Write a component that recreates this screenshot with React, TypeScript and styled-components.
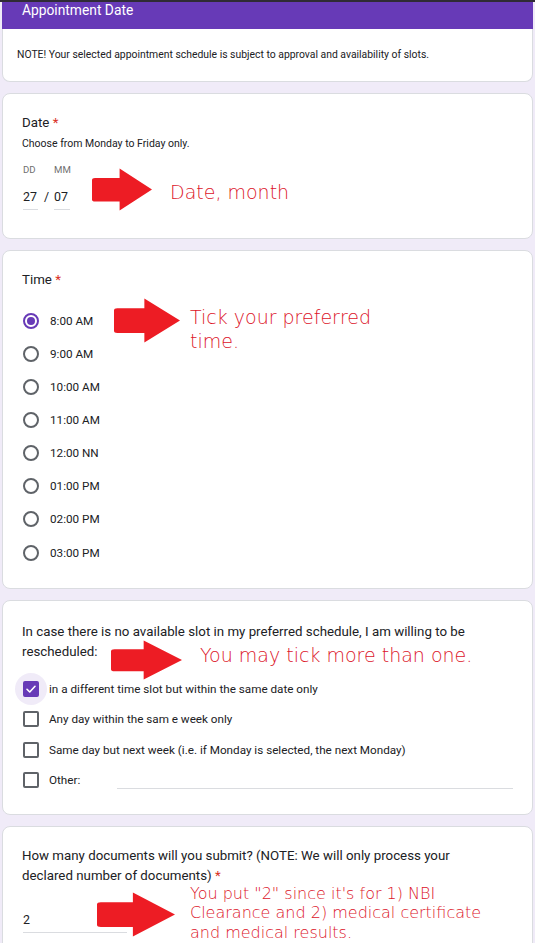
import React from "react";
import styled, { createGlobalStyle } from "styled-components";

const GlobalStyle = createGlobalStyle`
  html, body { margin: 0; padding: 0; background: #f0ebf8; overflow: hidden; }
  body { font-family: Roboto, "Liberation Sans", Arial, sans-serif; color: #202124; }
`;

const TopStrip = styled.div`
  height: 2px;
  background: #2f2b35;
`;

const Page = styled.main`
  display: flex;
  flex-direction: column;
  gap: 11px;
  padding: 0 2px;
`;

const SectionBlock = styled.section`
  display: flex;
  flex-direction: column;
`;

const SectionTab = styled.div`
  background: #673ab7;
  color: #fff;
  height: 27px;
  padding: 1px 20px 0;
  font-size: 13.8px;
  line-height: 14px;
  box-sizing: border-box;
`;

const NoteBody = styled.div`
  background: #fff;
  border: 1px solid #dadce0;
  border-top: none;
  border-radius: 0 0 8px 8px;
  padding: 19px 14px;
  font-size: 10.4px;
  line-height: 14px;
`;

const Card = styled.section<{ $pt?: number; $pb?: number }>`
  position: relative;
  background: #fff;
  border: 1px solid #dadce0;
  border-radius: 8px;
  padding: ${(p) => p.$pt ?? 21}px 19px ${(p) => p.$pb ?? 20}px;
`;

const Title = styled.div`
  font-size: 13.3px;
  line-height: 16px;
`;

const Question = styled.div`
  max-width: 452px;
  font-size: 13.3px;
  line-height: 20px;
`;

const Star = styled.span`
  color: #d93025;
`;

const Help = styled.div`
  font-size: 10.5px;
  line-height: 14px;
  margin-top: 6px;
`;

const DateGrid = styled.div`
  display: grid;
  grid-template-columns: 15px 4px 16px;
  column-gap: 6px;
  row-gap: 12px;
  margin-top: 12px;
  margin-left: 1px;
`;

const DateLabel = styled.div`
  font-size: 9.6px;
  line-height: 14px;
  color: #6f6f6f;
  white-space: nowrap;
`;

const DateValue = styled.div<{ $plain?: boolean }>`
  font-size: 12.4px;
  line-height: 16px;
  padding-bottom: 4px;
  border-bottom: 1px solid ${(p) => (p.$plain ? "transparent" : "#dadce0")};
  color: #202124;
`;

const OptionList = styled.div<{ $mt: number }>`
  display: flex;
  flex-direction: column;
  margin-top: ${(p) => p.$mt}px;
`;

const OptionRow = styled.div<{ $h: number; $gap: number }>`
  display: flex;
  align-items: center;
  height: ${(p) => p.$h}px;
  gap: ${(p) => p.$gap}px;
  padding-left: 1px;
  font-size: 11.7px;
  color: #202124;
`;

const Radio = styled.span<{ $on?: boolean }>`
  width: 16px;
  height: 16px;
  box-sizing: border-box;
  border-radius: 50%;
  border: 2px solid ${(p) => (p.$on ? "#673ab7" : "#5f6368")};
  display: flex;
  align-items: center;
  justify-content: center;
  flex: none;
  &::after {
    content: "";
    width: 8px;
    height: 8px;
    border-radius: 50%;
    background: ${(p) => (p.$on ? "#673ab7" : "transparent")};
  }
`;

const Check = styled.span<{ $on?: boolean }>`
  position: relative;
  width: 16px;
  height: 16px;
  box-sizing: border-box;
  border-radius: 2px;
  border: 2px solid ${(p) => (p.$on ? "#673ab7" : "#5f6368")};
  background: ${(p) => (p.$on ? "#673ab7" : "transparent")};
  display: flex;
  align-items: center;
  justify-content: center;
  flex: none;
  &::before {
    content: "";
    position: absolute;
    left: 50%;
    top: 50%;
    width: 32px;
    height: 32px;
    margin: -16px 0 0 -16px;
    border-radius: 50%;
    background: ${(p) => (p.$on ? "rgba(103,58,183,0.1)" : "transparent")};
    z-index: -1;
  }
`;

const CheckWrap = styled.span`
  position: relative;
  z-index: 0;
  display: flex;
`;

const OtherLine = styled.span`
  flex: 1;
  align-self: flex-end;
  margin: 0 0 6px 27px;
  border-bottom: 1px solid #dadce0;
`;

const ShortAnswer = styled.div`
  width: 104px;
  margin-top: 26px;
  margin-left: 1px;
  font-size: 12.4px;
  line-height: 16px;
  padding-bottom: 4px;
  border-bottom: 1px solid #dadce0;
`;

const Annotation = styled.div`
  position: absolute;
  left: 0;
  top: 0;
  width: 100%;
  height: 100%;
  pointer-events: none;
`;

const ArrowBox = styled.svg<{ $l: number; $t: number }>`
  position: absolute;
  left: ${(p) => p.$l}px;
  top: ${(p) => p.$t}px;
`;

const RedNote = styled.div<{ $l: number; $t: number; $w: number; $lh: number; $fs?: number }>`
  position: absolute;
  left: ${(p) => p.$l}px;
  top: ${(p) => p.$t}px;
  width: ${(p) => p.$w}px;
  font-family: "DejaVu Sans", Verdana, sans-serif;
  font-weight: 200;
  font-size: ${(p) => p.$fs ?? 19}px;
  line-height: ${(p) => p.$lh}px;
  color: #dc1429;
`;

type ArrowProps = { l: number; t: number; w: number; h: number };
const RedArrow = ({ l, t, w, h }: ArrowProps) => (
  <ArrowBox $l={l} $t={t} width={w} height={h} viewBox="0 0 100 100" preserveAspectRatio="none">
    <path d="M5 23 H46 V1 L100 50 L46 99 V78 H5 Q0 78 0 73 V28 Q0 23 5 23 Z" fill="#ed1c24" />
  </ArrowBox>
);

const times = ["8:00 AM", "9:00 AM", "10:00 AM", "11:00 AM", "12:00 NN", "01:00 PM", "02:00 PM", "03:00 PM"];
const choices = [
  "in a different time slot but within the same date only",
  "Any day within the sam e week only",
  "Same day but next week (i.e. if Monday is selected, the next Monday)",
];

export default function App() {
  return (
    <>
      <GlobalStyle />
      <TopStrip />
      <Page>
        <SectionBlock>
          <SectionTab>Appointment Date</SectionTab>
          <NoteBody>NOTE! Your selected appointment schedule is subject to approval and availability of slots.</NoteBody>
        </SectionBlock>

        <Card $pb={28}>
          <Title>
            Date <Star>*</Star>
          </Title>
          <Help>Choose from Monday to Friday only.</Help>
          <DateGrid>
            <DateLabel>DD</DateLabel>
            <span />
            <DateLabel>MM</DateLabel>
            <DateValue>27</DateValue>
            <DateValue $plain>/</DateValue>
            <DateValue>07</DateValue>
          </DateGrid>
          <Annotation>
            <RedArrow l={89} t={74} w={60} h={43} />
            <RedNote $l={167} $t={86} $w={140} $lh={24}>Date, month</RedNote>
          </Annotation>
        </Card>

        <Card $pb={19}>
          <Title>
            Time <Star>*</Star>
          </Title>
          <OptionList $mt={16}>
            {times.map((t, i) => (
              <OptionRow key={t} $h={33.15} $gap={11}>
                <Radio $on={i === 0} />
                {t}
              </OptionRow>
            ))}
          </OptionList>
          <Annotation>
            <RedArrow l={111} t={47} w={66} h={45} />
            <RedNote $l={187} $t={54} $w={200} $lh={24}>Tick your preferred time.</RedNote>
          </Annotation>
        </Card>

        <Card $pb={19}>
          <Question>In case there is no available slot in my preferred schedule, I am willing to be rescheduled:</Question>
          <OptionList $mt={12}>
            {choices.map((c, i) => (
              <OptionRow key={c} $h={30.2} $gap={10}>
                <CheckWrap>
                  <Check $on={i === 0}>
                    {i === 0 && (
                      <svg width="12" height="12" viewBox="0 0 24 24">
                        <path d="M4 12.5 L9.5 18 L20 6.5" fill="none" stroke="#fff" strokeWidth="3.2" strokeLinecap="round" strokeLinejoin="round" />
                      </svg>
                    )}
                  </Check>
                </CheckWrap>
                {c}
              </OptionRow>
            ))}
            <OptionRow $h={30.2} $gap={10}>
              <CheckWrap>
                <Check />
              </CheckWrap>
              Other:
              <OtherLine />
            </OptionRow>
          </OptionList>
          <Annotation>
            <RedArrow l={108} t={39} w={71} h={40} />
            <RedNote $l={197} $t={42} $w={290} $lh={24}>You may tick more than one.</RedNote>
          </Annotation>
        </Card>

        <Card $pt={19} $pb={40}>
          <Question>
            How many documents will you submit? (NOTE: We will only process your declared number of documents) <Star>*</Star>
          </Question>
          <ShortAnswer>2</ShortAnswer>
          <Annotation>
            <RedArrow l={94} t={65} w={78} h={45} />
            <RedNote $l={187} $t={57} $w={300} $lh={19.5} $fs={16}>
              You put "2" since it's for 1) NBI Clearance and 2) medical certificate and medical results.
            </RedNote>
          </Annotation>
        </Card>
      </Page>
    </>
  );
}
